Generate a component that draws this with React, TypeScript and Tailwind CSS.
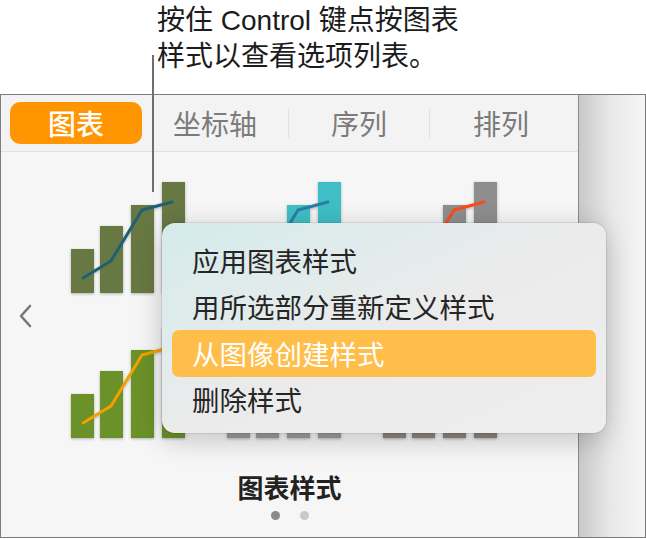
import React from "react";

type ChartProps = { bar: string; line: string };

function Chart({ bar, line }: ChartProps) {
  const bars = [
    { x: 0, y: 67 },
    { x: 29, y: 44 },
    { x: 60, y: 23 },
    { x: 91, y: 0 },
  ];
  return (
    <svg
      width="114"
      height="112"
      viewBox="0 0 114 112"
      className="block overflow-visible drop-shadow-[0_1px_1.5px_rgba(0,0,0,0.28)]"
    >
      {bars.map((b, i) => (
        <rect key={i} x={b.x} y={b.y} width="23" height={111 - b.y} fill={bar} />
      ))}
      <polyline
        points="12,96 40,79 71,28 101,20"
        fill="none"
        stroke={line}
        strokeWidth="3"
        strokeLinejoin="round"
        strokeLinecap="round"
      />
    </svg>
  );
}

export default function App() {
  const charts: ChartProps[] = [
    { bar: "#687843", line: "#1f5f74" },
    { bar: "#3fbfc5", line: "#2a7eab" },
    { bar: "#8e8e8e", line: "#ff4a1a" },
    { bar: "#6b9129", line: "#f2a100" },
    { bar: "#9b9b9b", line: "#6f6f6f" },
    { bar: "#8b8580", line: "#555555" },
  ];

  const items = ["应用图表样式", "用所选部分重新定义样式", "从图像创建样式", "删除样式"];

  return (
    <div className="relative w-[646px] h-[539px] overflow-hidden bg-white font-['Noto_Sans_CJK_SC','Noto_Sans',sans-serif]">
      {/* Callout text */}
      <div className="h-[94px] pl-[157px] pt-[3px] text-[28px] leading-[36px] text-[#1c1c1c] font-['Liberation_Sans','Noto_Sans_CJK_SC',sans-serif]">
        <div>按住 Control 键点按图表</div>
        <div>样式以查看选项列表。</div>
      </div>

      {/* Frame */}
      <div className="flex h-[444px] w-[646px] border border-[#7c7c7c]">
        {/* Main panel */}
        <div className="flex w-[577px] flex-col bg-[#f6f6f6]">
          {/* Tab bar */}
          <div className="flex h-[57px] items-center border-b border-[#e2e2e2] bg-[#f3f3f3] pl-[9px]">
            <div className="flex h-[42px] w-[132px] items-center justify-center rounded-[10px] bg-[#ff9500] text-[28px] font-medium text-white">
              图表
            </div>
            <div className="flex h-[42px] w-[146px] items-center justify-center text-[28px] text-[#7b7b7b]">
              坐标轴
            </div>
            <div className="flex h-[29px] w-[141px] items-center justify-center border-l border-[#e0e0e0] text-[28px] text-[#7b7b7b]">
              序列
            </div>
            <div className="flex h-[29px] w-[143px] items-center justify-center border-l border-[#e0e0e0] text-[28px] text-[#7b7b7b]">
              排列
            </div>
          </div>

          {/* Content */}
          <div className="flex flex-1 flex-col">
            <div className="flex pt-[30px]">
              <div className="flex w-[70px] items-center justify-center pt-[10px]">
                <svg width="16" height="24" viewBox="0 0 16 24" className="ml-[-20px]">
                  <polyline
                    points="12,2 3,12 12,22"
                    fill="none"
                    stroke="#777777"
                    strokeWidth="2.6"
                    strokeLinecap="round"
                    strokeLinejoin="round"
                  />
                </svg>
              </div>
              <div className="grid grid-cols-[114px_114px_114px] gap-x-[42px] gap-y-[33px]">
                {charts.map((c, i) => (
                  <Chart key={i} bar={c.bar} line={c.line} />
                ))}
              </div>
            </div>
            <div className="mt-[32px] text-center text-[26px] font-bold leading-[32px] text-[#222222]">
              图表样式
            </div>
            <div className="mt-[8px] flex justify-center gap-[20px]">
              <div className="h-[9px] w-[9px] rounded-full bg-[#8a8a8a]" />
              <div className="h-[9px] w-[9px] rounded-full bg-[#c9c9c9]" />
            </div>
          </div>
        </div>
        {/* Right strip */}
        <div className="flex-1 border-l border-[#8a8a8a] bg-gradient-to-r from-[#c9c9c9] via-[#e9e9e9] to-[#f5f5f5]" />
      </div>

      {/* Callout line */}
      <div className="absolute left-[152px] top-[55px] h-[137px] w-[1.5px] bg-[#6e6e6e]" />

      {/* Context menu */}
      <div className="absolute left-[162px] top-[223px] h-[210px] w-[444px] rounded-[13px] bg-gradient-to-br from-[#d4ebeb] via-[#ebebeb] to-[#eeeeee] px-[10px] pt-[14px] shadow-[0_6px_28px_rgba(0,0,0,0.22),0_0_0_1px_rgba(0,0,0,0.08)]">
        {items.map((t, i) => (
          <div
            key={i}
            className={
              i === 2
                ? "flex h-[46.5px] items-center rounded-[7px] bg-[#ffbd4a] px-[20px] text-[27.5px] text-white"
                : "flex h-[46.5px] items-center px-[20px] text-[27.5px] text-[#262626]"
            }
          >
            {t}
          </div>
        ))}
      </div>
    </div>
  );
}
